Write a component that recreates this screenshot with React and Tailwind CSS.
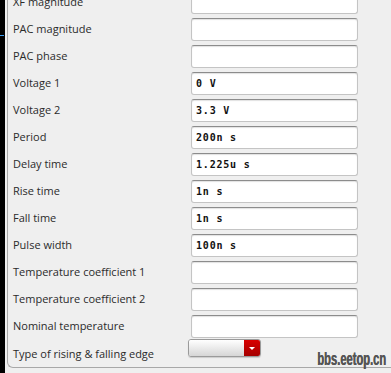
import React from 'react';

const rows = [
  { label: 'XF magnitude', value: '' },
  { label: 'PAC magnitude', value: '' },
  { label: 'PAC phase', value: '' },
  { label: 'Voltage 1', value: '0 V' },
  { label: 'Voltage 2', value: '3.3 V' },
  { label: 'Period', value: '200n s' },
  { label: 'Delay time', value: '1.225u s' },
  { label: 'Rise time', value: '1n s' },
  { label: 'Fall time', value: '1n s' },
  { label: 'Pulse width', value: '100n s' },
  { label: 'Temperature coefficient 1', value: '' },
  { label: 'Temperature coefficient 2', value: '' },
  { label: 'Nominal temperature', value: '' },
];

function Field({ value }) {
  return (
    <div className="w-[167px] h-[23px] bg-white border border-[#c4c4c4] border-t-[#8c8c8c] rounded-[3px] shadow-[inset_0_1px_1px_rgba(0,0,0,0.12)] flex items-center pl-[4px] font-['DejaVu_Sans_Mono',monospace] font-bold text-[10px] tracking-[0.8px] text-[#111] whitespace-pre">
      {value}
    </div>
  );
}

export default function App() {
  return (
    <div className="relative flex h-[373px] w-[391px] overflow-hidden bg-[#efefef] font-['Open_Sans',sans-serif]">
      {/* dark window edge */}
      <div className="relative w-[5px] shrink-0 bg-black">
        <div className="absolute left-0 top-[35px] h-px w-[4px] bg-[#3a9bf0]" />
      </div>

      <div className="flex-1">
        <div className="ml-[2px] border-l border-b border-[#a8a8a8] rounded-bl-[6px] overflow-hidden">
          <div className="-mt-[9px] flex flex-col gap-[4px] pl-[5px]">
            {rows.map((r) => (
              <div key={r.label} className="flex h-[23px] items-center">
                <div className="w-[178px] shrink-0 text-[11px] text-[#2b2b2b]">{r.label}</div>
                <Field value={r.value} />
              </div>
            ))}
          </div>
          <div className="mt-[1px] flex h-[28px] pl-[5px]">
            <div className="w-[175px] shrink-0 self-center pt-[2px] text-[11px] text-[#2b2b2b]">
              Type of rising &amp; falling edge
            </div>
            <div className="flex h-[18px] w-[73px] overflow-hidden rounded-[3px] border border-[#9a9a9a] shadow-[0_1px_1px_rgba(0,0,0,0.15)]">
              <div className="flex-1 bg-gradient-to-b from-white to-[#d6d6d6]" />
              <div className="flex w-[16px] items-center justify-center bg-gradient-to-b from-[#d80000] to-[#a50000]">
                <div className="h-0 w-0 border-x-[3px] border-t-[3px] border-x-transparent border-t-white" />
              </div>
            </div>
          </div>
        </div>
      </div>

      {/* watermark */}
      <div className="absolute right-[5px] top-[350px] origin-right scale-x-[0.62] font-['Liberation_Sans',sans-serif] text-[18px] font-bold leading-none text-[#555] [text-shadow:0.6px_0_0_#555]">
        bbs.eetop.cn
      </div>
    </div>
  );
}
